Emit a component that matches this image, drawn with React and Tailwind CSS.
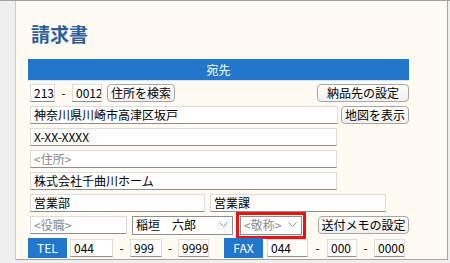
const font = "font-['Noto_Sans_CJK_JP','Noto_Sans',sans-serif]";

function Field({ w, value, placeholder, className = '' }) {
  return (
    <div
      className={`h-[18px] shrink-0 bg-white border border-[#dcdcdc] border-b-[#8e8e8e] pl-[3px] text-[12px] leading-[16px] whitespace-nowrap overflow-hidden ${
        placeholder ? 'text-[#8a8a8a]' : 'text-black'
      } ${w} ${className}`}
    >
      {value || placeholder}
    </div>
  );
}

function Button({ w, label, className = '' }) {
  return (
    <div
      className={`h-[18px] shrink-0 rounded-[4px] border border-[#a6a6a6] bg-gradient-to-b from-white to-[#f0f0f0] text-[12px] leading-[16px] text-black text-center whitespace-nowrap ${w} ${className}`}
    >
      {label}
    </div>
  );
}

function Select({ w, value, placeholder, className = '' }) {
  return (
    <div
      className={`h-[19px] shrink-0 bg-white border border-[#8e8e8e] flex items-center justify-between pl-[3px] pr-[4px] text-[12px] ${
        placeholder ? 'text-[#8a8a8a]' : 'text-black'
      } ${w} ${className}`}
    >
      <span className="whitespace-pre">{value || placeholder}</span>
      <svg width="9" height="6" viewBox="0 0 9 6" className="shrink-0">
        <polyline points="0.5,0.5 4.5,4.5 8.5,0.5" fill="none" stroke="#8a8a8a" strokeWidth="1" />
      </svg>
    </div>
  );
}

function Dash({ w }) {
  return <div className={`shrink-0 text-center text-[12px] leading-[18px] text-black ${w}`}>-</div>;
}

function Label({ text }) {
  return (
    <div className="w-[39px] h-[20px] shrink-0 bg-[#2277cc] text-white text-[12px] leading-[20px] text-center">
      {text}
    </div>
  );
}

export default function App() {
  return (
    <div className={`w-[450px] h-[263px] bg-[#efefef] border-t border-[#a0a0a0] overflow-hidden ${font}`}>
      <div className="ml-[15px] w-[433px] h-[259px] bg-[#fffaf2] border-l border-r border-b border-l-[#cdcdcd] border-r-[#a6a6a6] border-b-[#a6a6a6] pl-[12px] pt-[19px]">
        <h1 className="h-[28px] leading-[28px] pl-[3px] text-[19px] font-bold text-[#2c5f9a]">請求書</h1>

        <div className="mt-[11px] w-[381px] h-[22px] bg-[#2277cc] border-b border-[#d6e4f2] text-white text-[12px] leading-[21px] text-center">
          宛先
        </div>

        <div className="mt-[3px] flex flex-col gap-[4px] w-[381px]">
          <div className="flex items-center pl-[2px]">
            <Field w="w-[25px]" value="213" />
            <Dash w="w-[17px]" />
            <Field w="w-[30px]" value="0012" />
            <Button w="w-[68px]" label="住所を検索" className="ml-[5px]" />
            <Button w="w-[92px]" label="納品先の設定" className="ml-auto" />
          </div>

          <div className="flex items-center pl-[2px]">
            <Field w="w-[308px]" value="神奈川県川崎市高津区坂戸" />
            <Button w="w-[68px]" label="地図を表示" className="ml-auto" />
          </div>

          <div className="flex items-center pl-[2px]">
            <Field w="w-[307px]" value="X-XX-XXXX" />
          </div>

          <div className="flex items-center pl-[2px]">
            <Field w="w-[307px]" placeholder={'<住所>'} />
          </div>

          <div className="flex items-center pl-[2px]">
            <Field w="w-[307px]" value="株式会社千曲川ホーム" />
          </div>

          <div className="flex items-center pl-[2px]">
            <Field w="w-[175px]" value="営業部" />
            <Field w="w-[176px]" value="営業課" className="ml-[5px]" />
          </div>

          <div className="flex items-center pl-[2px] h-[18px]">
            <Field w="w-[97px]" placeholder={'<役職>'} />
            <Select w="w-[101px]" value={'稲垣　六郎'} className="ml-[5px]" />
            <Select
              w="w-[62px]"
              placeholder={'<敬称>'}
              className="ml-[7px] outline outline-[3px] outline-[#ee1111] outline-offset-[1px]"
            />
            <Button w="w-[91px]" label="送付メモの設定" className="ml-auto" />
          </div>

          <div className="flex items-center h-[20px]">
            <Label text="TEL" />
            <Field w="w-[43px]" value="044" className="ml-[3px]" />
            <Dash w="w-[17px]" />
            <Field w="w-[32px]" value="999" />
            <Dash w="w-[16px]" />
            <Field w="w-[31px]" value="9999" />
            <div className="ml-[15px]">
              <Label text="FAX" />
            </div>
            <Field w="w-[41px]" value="044" className="ml-[4px]" />
            <Dash w="w-[19px]" />
            <Field w="w-[30px]" value="000" />
            <Dash w="w-[17px]" />
            <Field w="w-[31px]" value="0000" />
          </div>
        </div>
      </div>
    </div>
  );
}
